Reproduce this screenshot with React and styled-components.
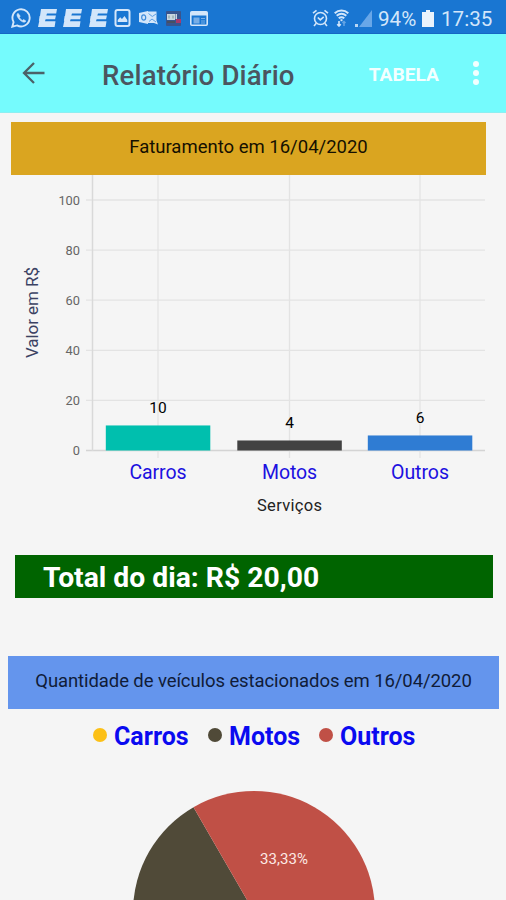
import React from 'react'
import styled, { createGlobalStyle } from 'styled-components'

const GlobalStyle = createGlobalStyle`
  * {
    box-sizing: border-box;
  }
  body {
    margin: 0;
    background: #f5f5f5;
    font-family: Roboto, 'Noto Sans', sans-serif;
    overflow: hidden;
  }
`

const Screen = styled.div`
  width: 506px;
  height: 900px;
  overflow: hidden;
  background: #f5f5f5;
`

const StatusBar = styled.header`
  display: flex;
  align-items: center;
  justify-content: space-between;
  height: 34px;
  padding: 3px 13px 0 11px;
  background: #1976d2;
  border-bottom: 1px solid #1468c4;
  color: #d3e6fa;
`

const StatusIcons = styled.div`
  display: flex;
  align-items: center;
  gap: ${({ $gap }) => $gap}px;

  svg {
    display: block;
  }
`

const StatusText = styled.span`
  width: ${({ $width }) => $width}px;
  font-size: 20.6px;
  line-height: 24px;
  white-space: nowrap;
  margin-top: 2px;
`

const Toolbar = styled.nav`
  display: flex;
  align-items: center;
  height: 79px;
  padding: 0 23px 0 22px;
  background: #75fbfd;
  border-bottom: 1px solid #8ceff1;
`

const IconButton = styled.button`
  display: flex;
  padding: 0;
  border: 0;
  background: none;
`

const Title = styled.h1`
  flex: 1;
  margin: 5px 0 0 57px;
  color: #4b5560;
  font-size: 27.6px;
  font-weight: 500;
  line-height: 34px;
  letter-spacing: 0.15px;
`

const TableButton = styled.button`
  margin: 3px 30px 0 0;
  padding: 0;
  border: 0;
  background: none;
  color: #f3ffff;
  font-family: inherit;
  font-size: 19.2px;
  font-weight: 700;
  line-height: 24px;
`

const Banner = styled.h2`
  height: 53px;
  margin: ${({ $margin }) => $margin};
  padding-top: 13px;
  background: ${({ $color }) => $color};
  color: ${({ $text }) => $text};
  font-size: 18.5px;
  font-weight: 400;
  line-height: 24px;
  letter-spacing: ${({ $spacing }) => $spacing}px;
  text-align: center;
  white-space: nowrap;
`

const Chart = styled.svg`
  display: block;
  font-family: Roboto, sans-serif;
`

const Total = styled.div`
  height: 43px;
  margin: 30px 13px 0 15px;
  padding-left: 28px;
  background: #006400;
  color: #fff;
  font-size: 28.3px;
  font-weight: 700;
  line-height: 46px;
`

const Legend = styled.ul`
  display: flex;
  height: 56px;
  margin: 0;
  padding: 0 0 0 93px;
  list-style: none;
  align-items: center;
`

const LegendItem = styled.li`
  display: flex;
  align-items: center;
  width: ${({ $width }) => $width}px;
  color: #0a0af0;
  font-size: 25px;
  font-weight: 700;
  line-height: 30px;
`

const Dot = styled.span`
  width: 14px;
  height: 14px;
  margin: 0 7px 4px 0;
  border-radius: 50%;
  background: ${({ $color }) => $color};
`

const services = [
  { name: 'Carros', value: 10, color: '#00bfae', x: 158, label: 57 },
  { name: 'Motos', value: 4, color: '#424242', x: 289.5, label: 55 },
  { name: 'Outros', value: 6, color: '#2f7cd3', x: 420, label: 58 },
]

const legend = [
  { name: 'Carros', color: '#fcc016', width: 115 },
  { name: 'Motos', color: '#504a38', width: 111 },
  { name: 'Outros', color: '#c05046', width: 110 },
]

const ticks = [0, 20, 40, 60, 80, 100]

// the chart starts right under the banner, zero line at 275.5
const yOf = (value) => 275.5 - value * 2.505

const ELetter = () => (
  <svg width="19" height="18" viewBox="0 0 19 18" fill="currentColor">
    <path d="M3 0H19l-.8 4.600H9L8.300 6.500h9.600l-.8 3.800H7.600l-.6 2h10.500L16.600 18H0L1.300 11.700H.9L1.600 7H2z" />
  </svg>
)

const WhatsApp = () => (
  <svg width="20" height="20" viewBox="0 0 20 20" fill="none" stroke="currentColor" strokeWidth="1.9">
    <path d="M1.3 18.7l1.3-4.6A8.6 8.6 0 1 1 6 17.4z" />
    <path d="M7 5.2c-1.1.7-1.3 2-.5 3.6 1.1 2.3 2.7 3.9 5 5 1.5.7 2.9.4 3.4-.8l-2.3-1.5-1.2.9c-1.4-.7-2.3-1.6-3-3l.8-1.3z" fill="currentColor" strokeWidth=".6" />
  </svg>
)

const Picture = () => (
  <svg width="17" height="18" viewBox="-.5 0 17 18" fill="none" stroke="currentColor" strokeWidth="2">
    <rect x="1" y="1" width="14" height="16" rx="2" />
    <path d="M3.2 13v-2l2.500-2.800 1.800 1.900 2.500-3.200 2.800 4V13z" fill="currentColor" stroke="none" />
  </svg>
)

const Outlook = () => (
  <svg width="21" height="16" viewBox="-1 0 21 16">
    <path d="M8 1.500h9.500v9l1.500 4-4-1.500H8z" fill="#d3e6fa" />
    <path d="M9.500 3.500l3.800 3L17 4M10 11.500l3-2.500 4 3" fill="none" stroke="#5c9fe2" strokeWidth="1" />
    <path d="M0 3l9-2v13L0 12z" fill="#d3e6fa" />
    <ellipse cx="4.700" cy="7.500" rx="2" ry="2.600" fill="none" stroke="#3d8bdb" strokeWidth="1.200" />
  </svg>
)

const NewsApp = () => (
  <svg width="18" height="15" viewBox="-1 0 18 15">
    <rect width="15" height="15" rx="1" fill="#38558e" />
    <path d="M1 3h4v6H1zM5 3h4v6H5zM9.500 3H11v5H9.500z" fill="#c9d6df" />
    <path d="M3 4.500v3M7 4.500v3" stroke="#7f9c98" />
    <path d="M10 8h5v4h-5z" fill="#a8396c" />
    <path d="M1 11h8" stroke="#465063" strokeWidth="2" />
  </svg>
)

const Window = () => (
  <svg width="18" height="15" viewBox="0 0 18 15">
    <rect x=".8" y=".8" width="16.400" height="13.400" rx="1" fill="none" stroke="#d3e6fa" strokeWidth="1.600" />
    <path d="M1 1h16v3.500H1z" fill="#d3e6fa" />
    <path d="M3.500 6.500h6v6h-6z" fill="#78aee6" />
    <path d="M11 7.500h4M11 10h4M11 12h4" stroke="#78aee6" />
  </svg>
)

const Alarm = () => (
  <svg width="17" height="18" viewBox="0 0 17 18" fill="none" stroke="currentColor" strokeWidth="1.600">
    <circle cx="8.500" cy="9.500" r="6" />
    <path d="M1 4.200L4.500 1.300M16 4.200l-3.500-2.900M4.300 14.200L2 17M12.700 14.200L15 17M5.800 8.500l2.500 2.400 3.400-3" />
  </svg>
)

const Wifi = () => (
  <svg width="15" height="18" viewBox="0 0 15 18" fill="none" stroke="currentColor" strokeWidth="2">
    <path d="M.7 4.200c4-3.600 9.600-3.600 13.600 0M2.700 6.800c3-2.500 6.600-2.500 9.600 0M4.700 9.300c1.800-1.300 3.800-1.300 5.600 0" />
    <path d="M7.500 10.200v2" />
    <path d="M5 12v5M3.200 15.200L5 17l1.800-1.800" strokeWidth="1.600" />
    <path d="M10 17v-4.500M8.500 14l1.500-1.500 1.500 1.500" stroke="#65a4e4" strokeWidth="1.500" />
  </svg>
)

const Signal = () => (
  <svg width="18" height="17" viewBox="0 0 18 17">
    <path d="M17 0v17H4z" fill="#68a7e8" />
    <path d="M0 14h3v3H0z" fill="#b8d6f4" />
  </svg>
)

const Battery = () => (
  <svg width="14" height="17" viewBox="0 0 14 17" fill="#eaf3fc">
    <path d="M4 0h4v2h4v15H0V2h4z" />
  </svg>
)

const BarChart = () => (
  <Chart width="506" height="350" viewBox="0 0 506 350">
    {ticks.map((tick) => (
      <g key={tick}>
        <path d={`M86 ${yOf(tick)}H485`} stroke={tick === 0 ? '#d4d4d4' : '#e3e3e3'} strokeWidth="1.300" />
        <text x="80" y={yOf(tick) + 4.5} fontSize="12.800" fill="#666" textAnchor="end">
          {tick}
        </text>
      </g>
    ))}
    <path d="M92.500 0V276" stroke="#d9d9d9" strokeWidth="1.500" />
    {services.map((item) => (
      <g key={item.name}>
        <path d={`M${item.x} 0V283`} stroke="#e3e3e3" strokeWidth="1.300" />
        <rect x={item.x - 52.2} y={yOf(item.value)} width="104.500" height={item.value * 2.505} fill={item.color} />
        <text x={item.x} y={yOf(item.value) - 12} fontSize="15.500" fill="#000" textAnchor="middle">
          {item.value}
        </text>
        <text x={item.x} y="303.500" fontSize="19.500" fill="#1c10e0" textAnchor="middle" textLength={item.label}>
          {item.name}
        </text>
      </g>
    ))}
    <text x="289.500" y="336" fontSize="16.500" fill="#222" textAnchor="middle" textLength="65">
      Serviços
    </text>
    <text transform="translate(37.500 183) rotate(-90)" fontSize="17" fill="#3b4263" textLength="91">
      Valor em R$
    </text>
  </Chart>
)

const PieChart = () => (
  <Chart width="506" height="135" viewBox="0 0 506 135">
    <path d="M254 147L193.500 42.200A121 121 0 0 0 193.500 251.800z" fill="#504a38" />
    <path d="M254 147L193.500 42.200A121 121 0 0 1 375 147z" fill="#c05046" />
    <text x="284" y="99" fontSize="15" fill="#fde9e4" textAnchor="middle" textLength="48">
      33,33%
    </text>
  </Chart>
)

const App = () => {
  return (
    <Screen>
      <GlobalStyle />
      <StatusBar>
        <StatusIcons $gap={6.5}>
          <WhatsApp />
          <ELetter />
          <ELetter />
          <ELetter />
          <Picture />
          <Outlook />
          <NewsApp />
          <Window />
        </StatusIcons>
        <StatusIcons $gap={5.5}>
          <Alarm />
          <Wifi />
          <Signal />
          <StatusText $width={38}>94%</StatusText>
          <Battery />
          <StatusText $width={52}>17:35</StatusText>
        </StatusIcons>
      </StatusBar>
      <Toolbar>
        <IconButton aria-label="Voltar">
          <svg width="23" height="22" viewBox="0 0 23 22" fill="none" stroke="#4b6268" strokeWidth="2.300">
            <path d="M22.500 11H2M12 1L2 11l10 10" />
          </svg>
        </IconButton>
        <Title>Relatório Diário</Title>
        <TableButton>TABELA</TableButton>
        <IconButton aria-label="Mais opções">
          <svg width="14" height="24" viewBox="0 0 14 24" fill="#f3ffff">
            <circle cx="7" cy="3" r="3" />
            <circle cx="7" cy="12" r="3" />
            <circle cx="7" cy="21" r="3" />
          </svg>
        </IconButton>
      </Toolbar>
      <Banner $color="#daa520" $text="#151000" $spacing={0} $margin="9px 20px 0 11px">
        Faturamento em 16/04/2020
      </Banner>
      <BarChart />
      <Total>Total do dia: R$ 20,00</Total>
      <Banner $color="#6495ed" $text="#101c38" $spacing={-0.09} $margin="58px 7px 0 8px">
        Quantidade de veículos estacionados em 16/04/2020
      </Banner>
      <Legend>
        {legend.map((item) => (
          <LegendItem key={item.name} $width={item.width}>
            <Dot $color={item.color} />
            {item.name}
          </LegendItem>
        ))}
      </Legend>
      <PieChart />
    </Screen>
  )
}

export default App
